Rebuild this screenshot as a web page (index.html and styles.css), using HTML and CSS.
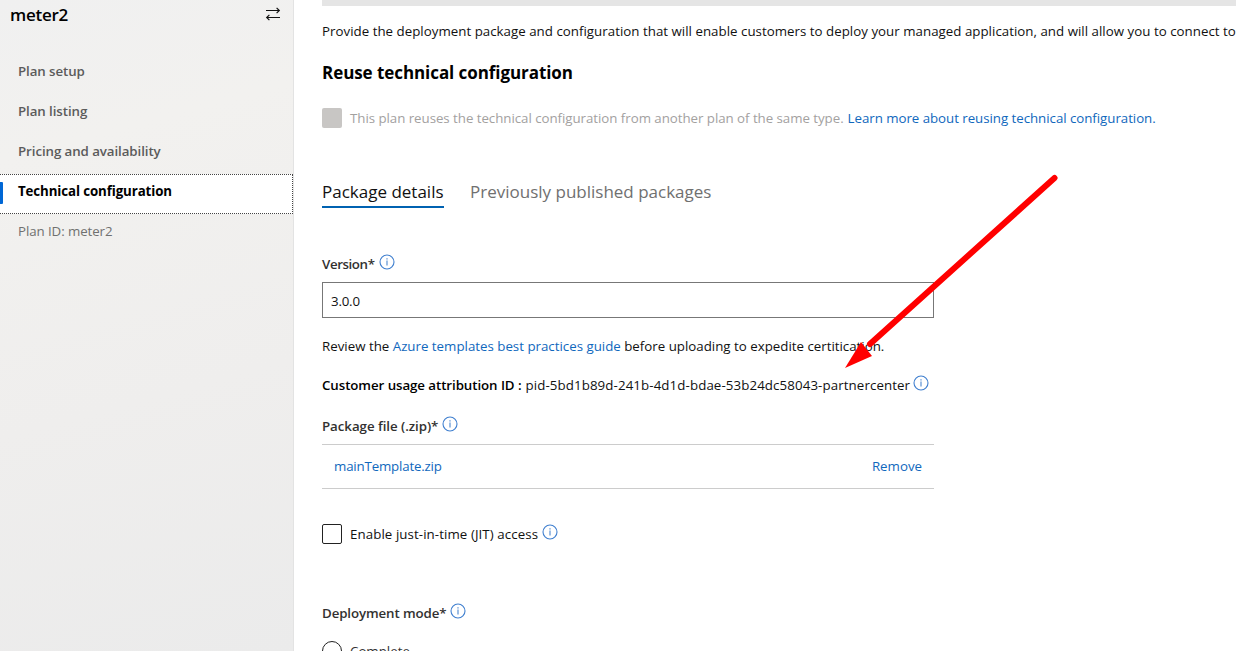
FILE: index.html
```html
<!DOCTYPE html>
<html lang="en">
<head>
<meta charset="utf-8">
<title>Technical configuration</title>
<link rel="stylesheet" href="styles.css">
</head>
<body>
<svg class="defs" width="0" height="0" aria-hidden="true">
  <symbol id="info" viewBox="0 0 16 16">
    <circle cx="8" cy="8" r="7" fill="none" stroke="#3f7fcf" stroke-width="1.1"/>
    <path d="M8 6.6V11.4" stroke="#4a86d0" stroke-width="1.1"/>
    <path d="M8 4.2V5.4" stroke="#4a86d0" stroke-width="1.2"/>
  </symbol>
</svg>
<div class="app">
  <aside class="sidebar">
    <header class="plan-head">
      <span class="plan-name">meter2</span>
      <svg class="swap" width="16" height="14" viewBox="0 0 16 14" fill="none" stroke="#111" stroke-width="1.2">
        <path d="M1 3.5H14.4M11.6 .9L14.3 3.5L11.6 6.1M15 10.5H1.6M4.4 7.9L1.7 10.5L4.4 13.1"/>
      </svg>
    </header>
    <nav class="nav">
      <a class="nav-item"><span class="t-nav">Plan setup</span></a>
      <a class="nav-item"><span class="t-nav">Plan listing</span></a>
      <a class="nav-item"><span class="t-nav">Pricing and availability</span></a>
      <a class="nav-item active"><span class="t-tech">Technical configuration</span></a>
      <div class="nav-item plan-id"><span class="t-nav">Plan ID: meter2</span></div>
    </nav>
  </aside>
  <main class="main">
    <div class="bar"></div>
    <p class="intro"><span class="t-intro">Provide the deployment package and configuration that will enable customers to deploy your managed application, and will allow you to connect to</span></p>
    <h2 class="heading"><span class="t-heading">Reuse technical configuration</span></h2>
    <div class="check-row reuse">
      <span class="box disabled"></span>
      <span class="muted t-reuse">This plan reuses the technical configuration from another plan of the same type.</span>
      <a class="link t-learn">Learn more about reusing technical configuration.</a>
    </div>
    <div class="tabs">
      <a class="tab selected"><span class="t-tab1">Package details</span></a>
      <a class="tab"><span class="t-tab2">Previously published packages</span></a>
    </div>
    <div class="label version-label"><span class="t-version">Version*</span><svg class="info"><use href="#info"/></svg></div>
    <div class="input">3.0.0</div>
    <p class="review"><span class="t-review">Review the <a class="link">Azure templates best practices guide</a> before uploading to expedite certitication.</span></p>
    <div class="usage"><b class="t-usage">Customer usage attribution ID :</b><span class="t-pid">pid-5bd1b89d-241b-4d1d-bdae-53b24dc58043-partnercenter</span><svg class="info"><use href="#info"/></svg></div>
    <div class="label package-label"><span class="t-package">Package file (.zip)*</span><svg class="info"><use href="#info"/></svg></div>
    <div class="file-row"><a class="link t-file">mainTemplate.zip</a><a class="link t-remove">Remove</a></div>
    <div class="check-row jit">
      <span class="box"></span>
      <span class="t-jit">Enable just-in-time (JIT) access</span><svg class="info"><use href="#info"/></svg>
    </div>
    <div class="label mode-label"><span class="t-mode">Deployment mode*</span><svg class="info"><use href="#info"/></svg></div>
    <div class="check-row radio-row"><span class="box radio"></span><span class="t-complete">Complete</span></div>
  </main>
  <svg class="arrow" width="216" height="198" viewBox="0 0 216 198">
    <path d="M210.500 8L26 174" stroke="#f00" stroke-width="6" stroke-linecap="round"/>
    <path d="M1 198L17 172L28 186Z" fill="#f00"/>
  </svg>
</div>
</body>
</html>
```
FILE: styles.css
```css
* { box-sizing: border-box; }
body {
  margin: 0;
  overflow: hidden;
  background: #fff;
  color: #111;
  font: 13.3px/20px "Open Sans", "Noto Sans", sans-serif;
}
p, h2 { margin: 0; }
span, a, b { white-space: nowrap; }
.defs { position: absolute; }
.app { display: flex; position: relative; width: 1236px; height: 651px; overflow: hidden; }

.sidebar {
  flex: none;
  width: 294px;
  border-right: 1px solid #e3e3e3;
  background: linear-gradient(165deg, #f0f0f0 0%, #f2f1ef 22%, #efeeed 60%, #ebebeb 100%);
}
.plan-head { display: flex; justify-content: space-between; height: 54px; padding: 5px 12px 0 10px; }
.plan-name { font-size: 17px; font-weight: 600; color: #000; letter-spacing: -.25px; }
.swap { margin-top: 2px; }
.nav-item { display: flex; height: 40px; padding: 7px 0 0 18px; color: #5b5b5b; font-weight: 600; }
.nav-item.active {
  position: relative;
  border: 1px dotted #444;
  border-left: 0;
  padding-top: 6px;
  background: #fff;
  color: #000;
  font-weight: 700;
}
.nav-item.active::before { content: ""; position: absolute; left: 0; top: 7px; width: 3px; height: 22px; background: #0067d5; border-radius: 0 1px 1px 0; }
.nav-item.plan-id { color: #707070; font-weight: 400; }
.t-nav { letter-spacing: -.08px; }
.t-tech { letter-spacing: -.11px; }

.main { flex: none; display: flex; flex-direction: column; width: 942px; padding-left: 28px; }
.main > * { flex: none; }
.bar { height: 6px; background: #e5e5e5; }
.intro { height: 20px; margin-top: 15px; letter-spacing: .02px; }
.heading { height: 24px; margin-top: 20px; font-size: 17px; line-height: 24px; font-weight: 700; color: #000; letter-spacing: -.07px; }
.check-row { display: flex; align-items: center; height: 20px; }
.reuse { margin-top: 23px; }
.box { flex: none; width: 20px; height: 20px; margin-right: 8px; border: 1px solid #222; border-radius: 2px; }
.box.disabled { border: 0; background: #c8c6c4; }
.muted { color: #a3a19f; }
.link { color: #1068bd; }
.t-reuse { letter-spacing: -.04px; }
.t-learn { margin-left: 4px; letter-spacing: -.04px; }
.tabs { display: flex; gap: 26px; height: 28px; margin-top: 52px; }
.tab { height: 28px; font-size: 17px; line-height: 23px; color: #707070; font-weight: 400; }
.tab.selected { width: 122px; border-bottom: 2px solid #0062b1; color: #111; }
.label { display: flex; height: 20px; color: #323130; font-weight: 600; }
.info { flex: none; width: 16px; height: 16px; margin: -.5px 0 0 4px; }
.version-label { margin-top: 46px; }
.t-version { letter-spacing: -.4px; }
.input { width: 612px; height: 36px; margin-top: 8px; padding: 8px; border: 1px solid #777; line-height: 20px; letter-spacing: -.2px; }
.review { height: 20px; margin-top: 18px; }
.usage { display: flex; height: 20px; margin-top: 19px; }
.usage b { font-weight: 600; color: #000; letter-spacing: -.07px; }
.usage span { margin-left: 4px; letter-spacing: .1px; }
.usage .info { margin-left: 3px; }
.package-label { margin-top: 21px; }
.t-package { letter-spacing: -.05px; }
.file-row { display: flex; justify-content: space-between; align-items: center; width: 612px; height: 45px; margin-top: 8px; padding: 0 12px 2px; border: solid #ccc; border-width: 1px 0; }
.t-file { letter-spacing: -.18px; }
.jit { margin-top: 35px; }
.t-jit { letter-spacing: .08px; }
.jit .info { margin: -5px 0 0 3.5px; }
.mode-label { margin-top: 59px; }
.t-mode { letter-spacing: -.11px; }
.radio-row { margin-top: 18px; color: #333; }
.box.radio { border-radius: 50%; }

.arrow { position: absolute; left: 844px; top: 170px; overflow: visible; }
```
